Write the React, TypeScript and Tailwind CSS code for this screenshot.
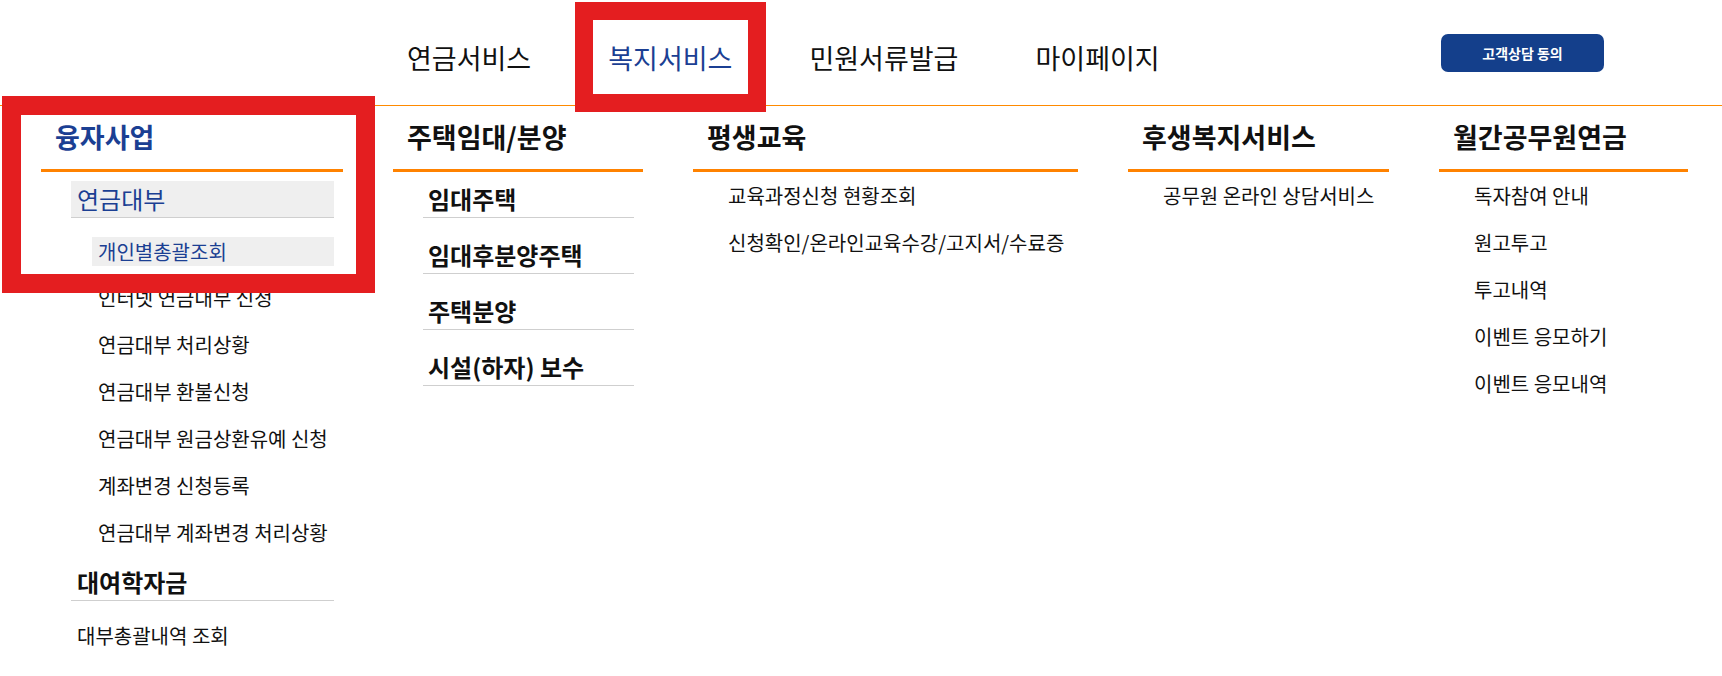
const topMenus = ["연금서비스", "복지서비스", "민원서류발급", "마이페이지"];

const loanItems = [
  "인터넷 연금대부 신청",
  "연금대부 처리상황",
  "연금대부 환불신청",
  "연금대부 원금상환유예 신청",
  "계좌변경 신청등록",
  "연금대부 계좌변경 처리상황",
];

const housingItems = ["임대주택", "임대후분양주택", "주택분양", "시설(하자) 보수"];

const eduItems = ["교육과정신청 현황조회", "신청확인/온라인교육수강/고지서/수료증"];

const welfareItems = ["공무원 온라인 상담서비스"];

const magazineItems = [
  "독자참여 안내",
  "원고투고",
  "투고내역",
  "이벤트 응모하기",
  "이벤트 응모내역",
];

const Heading = ({ title, active }: { title: string; active?: boolean }) => {
  return (
    <div
      className={
        active
          ? "h-[66px] flex items-center pl-[14px] border-b-[3px] border-[#ff8200] text-[27px] font-semibold text-[#1b3f93]"
          : "h-[66px] flex items-center pl-[14px] border-b-[3px] border-[#ff8200] text-[27px] font-semibold text-[#111]"
      }
    >
      {title}
    </div>
  );
};

const SimpleList = ({ items }: { items: string[] }) => {
  return (
    <ul className="pl-[35px]">
      {items.map((item, index) => {
        return (
          <li key={index} className="text-[20px] leading-[47px] text-[#111]">
            {item}
          </li>
        );
      })}
    </ul>
  );
};

const App = () => {
  return (
    <div
      className="relative w-full h-[676px] overflow-hidden bg-white"
      style={{ fontFamily: '"Noto Sans CJK KR", "Noto Sans", sans-serif' }}
    >
      {/* header */}
      <div className="h-[106px] flex items-start border-b border-[#ff8a00]">
        <ul className="flex gap-[77px] ml-[407px] mt-[39px]">
          {topMenus.map((menu, index) => {
            return (
              <li
                key={index}
                className={
                  index === 1
                    ? "text-[27px] leading-[38px] text-[#1b3f93]"
                    : "text-[27px] leading-[38px] text-[#111]"
                }
              >
                {menu}
              </li>
            );
          })}
        </ul>
        <button className="ml-auto mr-[118px] mt-[34px] w-[163px] h-[38px] rounded-[7px] bg-[#143f8b] text-white text-[14px] font-semibold">
          고객상담 동의
        </button>
      </div>

      {/* mega menu */}
      <div className="flex gap-[50px] pl-[41px]">
        <div className="w-[302px]">
          <Heading title="융자사업" active />
          <div className="mt-[9px] ml-[30px] mr-[9px] h-[37px] flex items-center pl-[6px] bg-[#efefef] border-b border-[#cfcfcf] text-[24px] text-[#1b3f93]">
            연금대부
          </div>
          <div className="mt-[19px] ml-[51px] mr-[9px] h-[29px] flex items-center pl-[6px] bg-[#efefef] text-[20px] text-[#1b3f93]">
            개인별총괄조회
          </div>
          <ul className="mt-[8px] pl-[57px]">
            {loanItems.map((item, index) => {
              return (
                <li key={index} className="text-[20px] leading-[47px] text-[#111]">
                  {item}
                </li>
              );
            })}
          </ul>
          <div className="mt-[8px] ml-[30px] mr-[9px] h-[37px] flex items-center pl-[6px] border-b border-[#cfcfcf] text-[24px] font-semibold text-[#111]">
            대여학자금
          </div>
          <div className="mt-[11px] pl-[36px] text-[20px] leading-[47px] text-[#111]">
            대부총괄내역 조회
          </div>
        </div>

        <div className="w-[250px]">
          <Heading title="주택임대/분양" />
          <ul className="mt-[9px] flex flex-col gap-[19px] ml-[30px] mr-[9px]">
            {housingItems.map((item, index) => {
              return (
                <li
                  key={index}
                  className="h-[37px] flex items-center pl-[5px] border-b border-[#cfcfcf] text-[24px] font-semibold text-[#111]"
                >
                  {item}
                </li>
              );
            })}
          </ul>
        </div>

        <div className="w-[385px]">
          <Heading title="평생교육" />
          <SimpleList items={eduItems} />
        </div>

        <div className="w-[261px]">
          <Heading title="후생복지서비스" />
          <SimpleList items={welfareItems} />
        </div>

        <div className="w-[249px]">
          <Heading title="월간공무원연금" />
          <SimpleList items={magazineItems} />
        </div>
      </div>

      {/* highlight boxes */}
      <div className="absolute left-[575px] top-[2px] w-[191px] h-[110px] border-[18px] border-[#e41e20] pointer-events-none"></div>
      <div className="absolute left-[2px] top-[96px] w-[373px] h-[197px] border-[19px] border-[#e41e20] pointer-events-none"></div>
    </div>
  );
};
export default App;
